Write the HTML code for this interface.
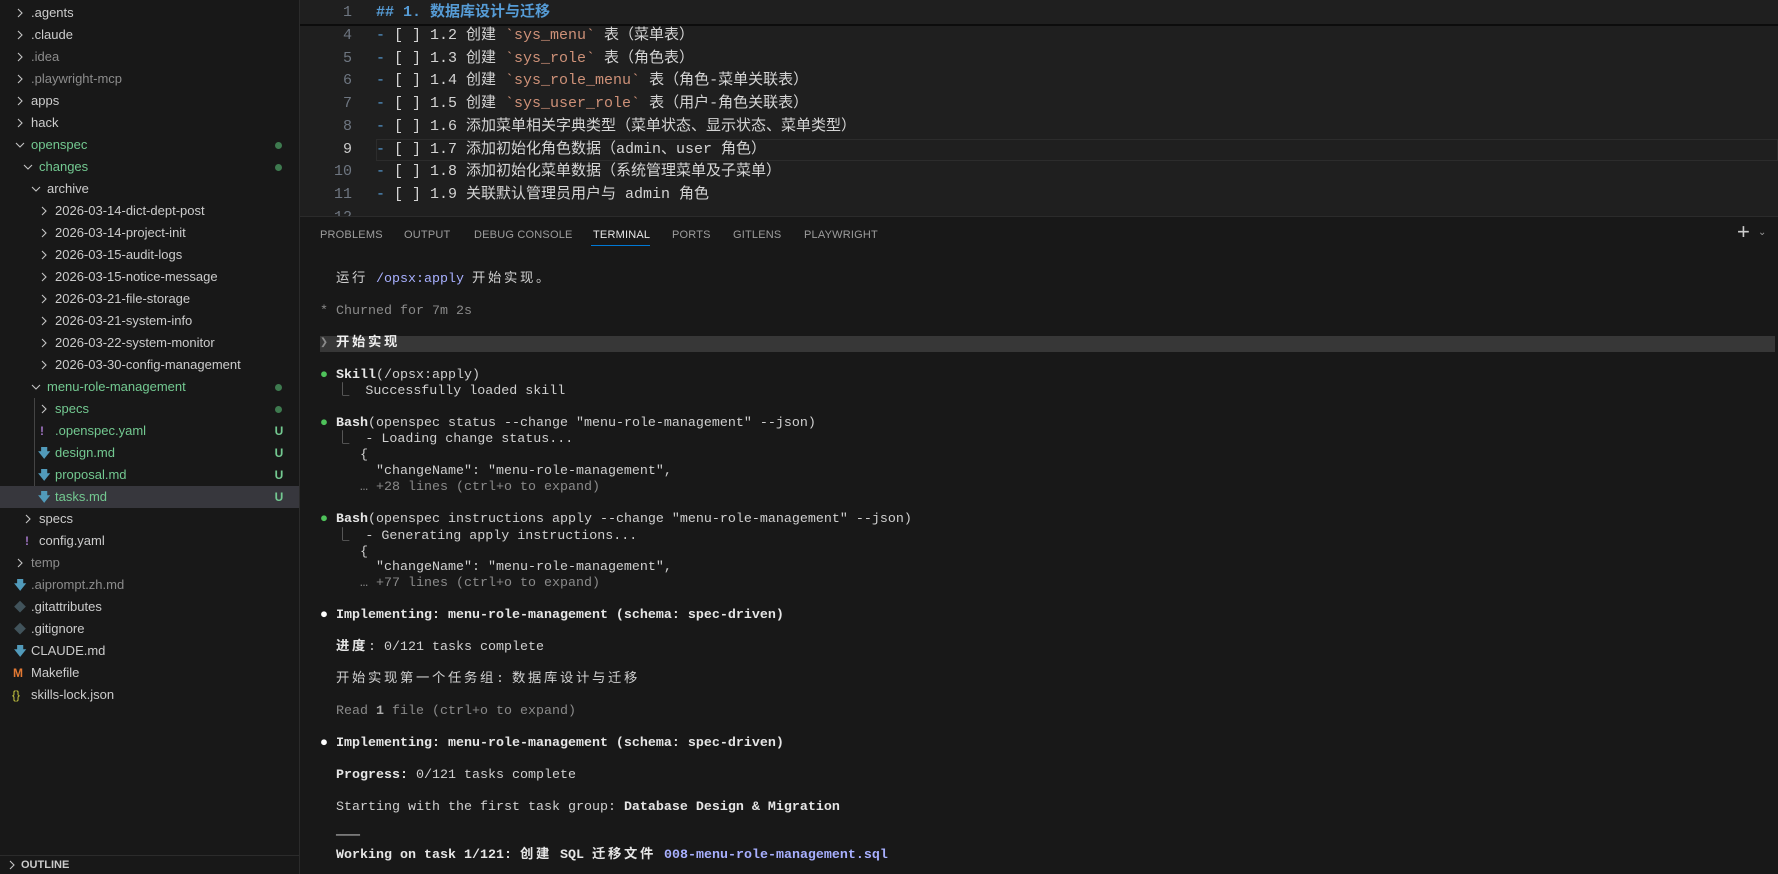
<!DOCTYPE html>
<html><head><meta charset="utf-8"><style>
*{margin:0;padding:0;box-sizing:border-box}
body{width:1778px;height:874px;background:#181818;overflow:hidden;position:relative;font-family:"Liberation Sans","Noto Sans CJK SC",sans-serif}
#side{position:absolute;left:0;top:0;width:300px;height:874px;background:#181818;border-right:1px solid #2b2b2b}
.r{position:absolute;left:0;width:299px;height:22px;line-height:22px;font-size:13px;color:#cccccc;white-space:nowrap}
.r .c{position:absolute;top:6px;width:12px;height:10px}
.r .t{position:absolute;top:0}
.g{color:#73c991!important}
.d{color:#8c8c8c!important}
.st{position:absolute;left:274px;top:0;width:10px;text-align:center;font-size:12px;font-weight:bold;color:#73c991}
.dot{position:absolute;left:275px;top:8px;width:7px;height:7px;border-radius:50%;background:#3e7a4f}
.ic{position:absolute;top:0;font-size:12px;font-weight:bold}
#ed{position:absolute;left:300px;top:0;width:1478px;height:216px;background:#1f1f1f;font-family:"Liberation Mono","Noto Sans CJK SC",monospace;font-size:15px}
.l{position:absolute;left:0;width:1478px;height:22.7px;line-height:22.7px;color:#d4d4d4;white-space:pre}
.n{position:absolute;left:0;width:52px;text-align:right;color:#6e7681}
.x{position:absolute;left:76px}
.b{color:#569cd6}.o{color:#ce9178}
#panel{position:absolute;left:300px;top:216px;width:1478px;height:658px;background:#181818;border-top:1px solid #2b2b2b}
.tab{position:absolute;top:12px;font-size:11px;color:#9d9d9d;letter-spacing:.2px}
#term{font-family:"Liberation Mono","Noto Sans CJK SC",monospace;font-size:13.33px;color:#d0d0d0}
#term .k{letter-spacing:2.67px}
.tl{position:absolute;left:36px;height:16px;line-height:16px;white-space:pre}
.gr{color:#8a8a8a}.pu{color:#a8b0ff}.bo{font-weight:bold;color:#e6e6e6}
.gd{color:#4ec25a}
</style></head><body>
<svg width="0" height="0" style="position:absolute"><defs>
<symbol id="cr" viewBox="0 0 12 10"><path d="M4 1l4 4-4 4" fill="none" stroke="#c5c5c5" stroke-width="1.1"/></symbol>
<symbol id="cd" viewBox="0 0 12 10"><path d="M2 3l4 4 4-4" fill="none" stroke="#c5c5c5" stroke-width="1.1"/></symbol>
</defs></svg>
<div id="side">
<div class="r" style="top:2px"><svg class="c" style="left:14px"><use href="#cr"/></svg><span class="t" style="left:31px">.agents</span></div>
<div class="r" style="top:24px"><svg class="c" style="left:14px"><use href="#cr"/></svg><span class="t" style="left:31px">.claude</span></div>
<div class="r" style="top:46px"><svg class="c" style="left:14px"><use href="#cr"/></svg><span class="t d" style="left:31px">.idea</span></div>
<div class="r" style="top:68px"><svg class="c" style="left:14px"><use href="#cr"/></svg><span class="t d" style="left:31px">.playwright-mcp</span></div>
<div class="r" style="top:90px"><svg class="c" style="left:14px"><use href="#cr"/></svg><span class="t" style="left:31px">apps</span></div>
<div class="r" style="top:112px"><svg class="c" style="left:14px"><use href="#cr"/></svg><span class="t" style="left:31px">hack</span></div>
<div class="r" style="top:134px"><svg class="c" style="left:14px"><use href="#cd"/></svg><span class="t g" style="left:31px">openspec</span><span class="dot"></span></div>
<div class="r" style="top:156px"><svg class="c" style="left:22px"><use href="#cd"/></svg><span class="t g" style="left:39px">changes</span><span class="dot"></span></div>
<div class="r" style="top:178px"><svg class="c" style="left:30px"><use href="#cd"/></svg><span class="t" style="left:47px">archive</span></div>
<div class="r" style="top:200px"><svg class="c" style="left:38px"><use href="#cr"/></svg><span class="t" style="left:55px">2026-03-14-dict-dept-post</span></div>
<div class="r" style="top:222px"><svg class="c" style="left:38px"><use href="#cr"/></svg><span class="t" style="left:55px">2026-03-14-project-init</span></div>
<div class="r" style="top:244px"><svg class="c" style="left:38px"><use href="#cr"/></svg><span class="t" style="left:55px">2026-03-15-audit-logs</span></div>
<div class="r" style="top:266px"><svg class="c" style="left:38px"><use href="#cr"/></svg><span class="t" style="left:55px">2026-03-15-notice-message</span></div>
<div class="r" style="top:288px"><svg class="c" style="left:38px"><use href="#cr"/></svg><span class="t" style="left:55px">2026-03-21-file-storage</span></div>
<div class="r" style="top:310px"><svg class="c" style="left:38px"><use href="#cr"/></svg><span class="t" style="left:55px">2026-03-21-system-info</span></div>
<div class="r" style="top:332px"><svg class="c" style="left:38px"><use href="#cr"/></svg><span class="t" style="left:55px">2026-03-22-system-monitor</span></div>
<div class="r" style="top:354px"><svg class="c" style="left:38px"><use href="#cr"/></svg><span class="t" style="left:55px">2026-03-30-config-management</span></div>
<div class="r" style="top:376px"><svg class="c" style="left:30px"><use href="#cd"/></svg><span class="t g" style="left:47px">menu-role-management</span><span class="dot"></span></div>
<div style="position:absolute;left:34px;top:398px;width:1px;height:110px;background:#444"></div>
<div class="r" style="top:398px"><svg class="c" style="left:38px"><use href="#cr"/></svg><span class="t g" style="left:55px">specs</span><span class="dot"></span></div>
<div class="r" style="top:420px"><span class="ic" style="left:40px;color:#a074c4">!</span><span class="t g" style="left:55px">.openspec.yaml</span><span class="st">U</span></div>
<div class="r" style="top:442px"><span class="ic" style="left:38px;color:#519aba">🡇</span><span class="t g" style="left:55px">design.md</span><span class="st">U</span></div>
<div class="r" style="top:464px"><span class="ic" style="left:38px;color:#519aba">🡇</span><span class="t g" style="left:55px">proposal.md</span><span class="st">U</span></div>
<div class="r" style="top:486px;background:#37373d"><span class="ic" style="left:38px;color:#519aba">🡇</span><span class="t g" style="left:55px">tasks.md</span><span class="st">U</span></div>
<div class="r" style="top:508px"><svg class="c" style="left:22px"><use href="#cr"/></svg><span class="t" style="left:39px">specs</span></div>
<div class="r" style="top:530px"><span class="ic" style="left:25px;color:#a074c4">!</span><span class="t" style="left:39px">config.yaml</span></div>
<div class="r" style="top:552px"><svg class="c" style="left:14px"><use href="#cr"/></svg><span class="t d" style="left:31px">temp</span></div>
<div class="r" style="top:574px"><span class="ic" style="left:14px;color:#519aba">🡇</span><span class="t d" style="left:31px">.aiprompt.zh.md</span></div>
<div class="r" style="top:596px"><span class="ic" style="left:14px;color:#41535b">◆</span><span class="t" style="left:31px">.gitattributes</span></div>
<div class="r" style="top:618px"><span class="ic" style="left:14px;color:#41535b">◆</span><span class="t" style="left:31px">.gitignore</span></div>
<div class="r" style="top:640px"><span class="ic" style="left:14px;color:#519aba">🡇</span><span class="t" style="left:31px">CLAUDE.md</span></div>
<div class="r" style="top:662px"><span class="ic" style="left:13px;color:#e37933">M</span><span class="t" style="left:31px">Makefile</span></div>
<div class="r" style="top:684px"><span class="ic" style="left:12px;color:#cbcb41;font-weight:normal">{}</span><span class="t" style="left:31px">skills-lock.json</span></div>
<div style="position:absolute;left:0;top:855px;width:299px;height:1px;background:#2b2b2b"></div>
<div class="r" style="top:856px;height:18px;line-height:18px;font-size:11px;font-weight:bold"><svg class="c" style="left:6px;top:4px"><use href="#cr"/></svg><span class="t" style="left:21px">OUTLINE</span></div>
</div>

<div id="ed">
<div class="l" style="top:2px"><span class="n">1</span><span class="x b" style="font-weight:bold">## 1. 数据库设计与迁移</span></div>
<div style="position:absolute;left:0;top:24px;width:1478px;height:2px;background:#0c0c0c"></div>
<div class="l" style="top:25px"><span class="n">4</span><span class="x"><span class="b">-</span> [ ] 1.2 创建 <span class="o">`sys_menu`</span> 表（菜单表）</span></div>
<div class="l" style="top:47.7px"><span class="n">5</span><span class="x"><span class="b">-</span> [ ] 1.3 创建 <span class="o">`sys_role`</span> 表（角色表）</span></div>
<div class="l" style="top:70.4px"><span class="n">6</span><span class="x"><span class="b">-</span> [ ] 1.4 创建 <span class="o">`sys_role_menu`</span> 表（角色-菜单关联表）</span></div>
<div class="l" style="top:93.1px"><span class="n">7</span><span class="x"><span class="b">-</span> [ ] 1.5 创建 <span class="o">`sys_user_role`</span> 表（用户-角色关联表）</span></div>
<div class="l" style="top:115.8px"><span class="n">8</span><span class="x"><span class="b">-</span> [ ] 1.6 添加菜单相关字典类型（菜单状态、显示状态、菜单类型）</span></div>
<div style="position:absolute;left:76px;top:138.5px;width:1402px;height:22.7px;border:1px solid #2c2c2c"></div>
<div class="l" style="top:138.5px"><span class="n" style="color:#cccccc">9</span><span class="x"><span class="b">-</span> [ ] 1.7 添加初始化角色数据（admin、user 角色）</span></div>
<div class="l" style="top:161.2px"><span class="n">10</span><span class="x"><span class="b">-</span> [ ] 1.8 添加初始化菜单数据（系统管理菜单及子菜单）</span></div>
<div class="l" style="top:183.9px"><span class="n">11</span><span class="x"><span class="b">-</span> [ ] 1.9 关联默认管理员用户与 admin 角色</span></div>
<div class="l" style="top:206.6px"><span class="n">12</span></div>
</div>

<div id="panel">
<span class="tab" style="left:20px">PROBLEMS</span>
<span class="tab" style="left:104px">OUTPUT</span>
<span class="tab" style="left:174px">DEBUG CONSOLE</span>
<span class="tab" style="left:293px;color:#e7e7e7">TERMINAL</span>
<div style="position:absolute;left:291px;top:28px;width:59px;height:1px;background:#0078d4"></div>
<span class="tab" style="left:372px">PORTS</span>
<span class="tab" style="left:433px">GITLENS</span>
<span class="tab" style="left:504px">PLAYWRIGHT</span>
<span style="position:absolute;left:1437px;top:2px;font-size:22px;color:#cccccc;font-weight:200">+</span>
<span style="position:absolute;left:1458px;top:10px;font-size:10px;color:#999">⌄</span>
<div id="term">
<div style="position:absolute;left:20px;top:119px;width:1455px;height:16px;background:#373737"></div>
<div class="tl" style="top:55px"><span class="k">运行</span> <span class="pu">/opsx:apply</span> <span class="k">开始实现。</span></div>
<div class="tl gr" style="top:87px;left:20px">* Churned for 7m 2s</div>
<div class="tl" style="top:119px;left:20px;color:#eee;font-weight:bold"><span class="gr">❯</span> <span class="k">开始实现</span></div>
<div class="tl" style="top:151px;left:20px"><span class="gd">●</span> <span class="bo">Skill</span>(/opsx:apply)</div>
<div class="tl" style="top:167px"><span class="gr">⎿</span>  Successfully loaded skill</div>
<div class="tl" style="top:199px;left:20px"><span class="gd">●</span> <span class="bo">Bash</span>(openspec status --change "menu-role-management" --json)</div>
<div class="tl" style="top:215px"><span class="gr">⎿</span>  - Loading change status...</div>
<div class="tl" style="top:231px">   {</div>
<div class="tl" style="top:247px">     "changeName": "menu-role-management",</div>
<div class="tl gr" style="top:263px">   … +28 lines (ctrl+o to expand)</div>
<div class="tl" style="top:295px;left:20px"><span class="gd">●</span> <span class="bo">Bash</span>(openspec instructions apply --change "menu-role-management" --json)</div>
<div class="tl" style="top:312px"><span class="gr">⎿</span>  - Generating apply instructions...</div>
<div class="tl" style="top:328px">   {</div>
<div class="tl" style="top:343px">     "changeName": "menu-role-management",</div>
<div class="tl gr" style="top:359px">   … +77 lines (ctrl+o to expand)</div>
<div class="tl bo" style="top:391px;left:20px"><span style="color:#fff">●</span> Implementing: menu-role-management (schema: spec-driven)</div>
<div class="tl" style="top:423px"><span class="bo k">进度</span>: 0/121 tasks complete</div>
<div class="tl" style="top:455px"><span class="k">开始实现第一个任务组</span>: <span class="k">数据库设计与迁移</span></div>
<div class="tl gr" style="top:487px">Read <span class="bo" style="color:#aaa">1</span> file (ctrl+o to expand)</div>
<div class="tl bo" style="top:519px;left:20px"><span style="color:#fff">●</span> Implementing: menu-role-management (schema: spec-driven)</div>
<div class="tl" style="top:551px"><span class="bo">Progress:</span> 0/121 tasks complete</div>
<div class="tl" style="top:583px">Starting with the first task group: <span class="bo">Database Design &amp; Migration</span></div>
<div class="tl" style="top:612px">───</div>
<div class="tl bo" style="top:631px">Working on task 1/121: <span class="k">创建</span> SQL <span class="k">迁移文件</span> <span class="pu">008-menu-role-management.sql</span></div>
</div>
</div>
</body></html>
